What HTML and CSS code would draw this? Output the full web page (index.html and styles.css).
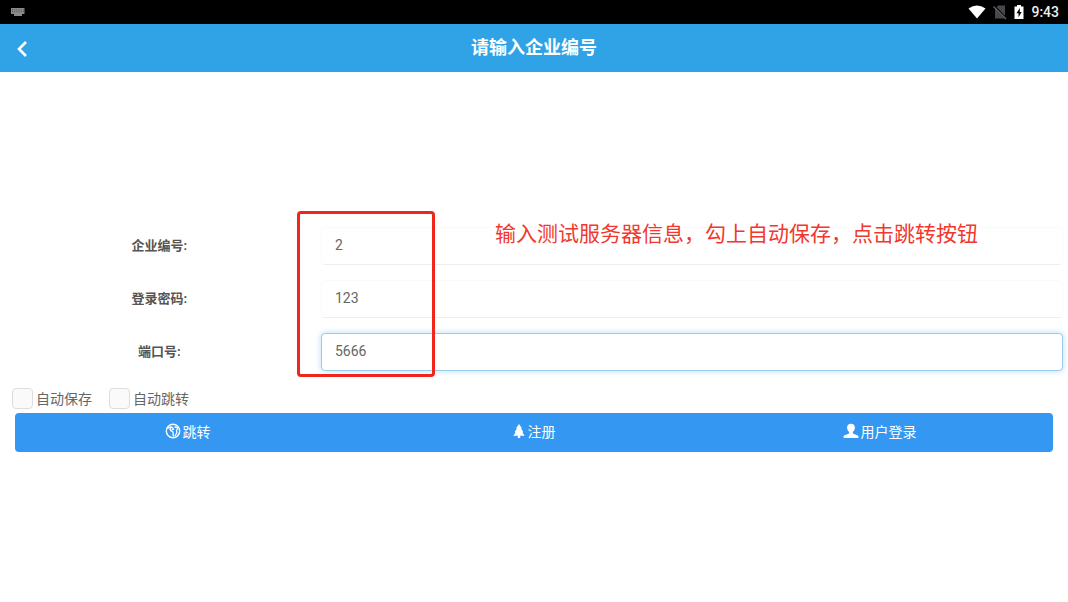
FILE: index.html
```html
<!DOCTYPE html>
<html lang="zh-CN">
<head>
<meta charset="utf-8">
<meta name="viewport" content="width=device-width, initial-scale=1">
<title>请输入企业编号</title>
<link rel="stylesheet" href="styles.css">
</head>
<body>
<div class="statusbar">
  <svg class="keyboard" width="16" height="10" viewBox="0 0 16 10" aria-hidden="true">
    <path fill="#8a8a8a" d="M1 1h13.500v6H1zM4 7h8v2H4z"/>
    <path stroke="#333" stroke-width=".6" stroke-dasharray="1 1.200" d="M2 2.800h12M2 4.600h12"/>
  </svg>
  <div class="status-icons">
    <svg width="18" height="15" viewBox="0 0 18 15" aria-hidden="true"><path fill="#fff" d="M.5 3.500Q9-2.500 17.500 3.500L9 13.500z"/></svg>
    <svg width="14" height="15" viewBox="0 0 14 15" aria-hidden="true">
      <path fill="#48484c" d="M5 .5h7v13H2V4z"/>
      <path stroke="#000" stroke-width="2.400" d="M1 1l12 12.500"/>
      <path stroke="#68686c" stroke-width="1.200" d="M.5 1.500l12.500 12.500"/>
    </svg>
    <svg width="10" height="15" viewBox="0 0 10 15" aria-hidden="true">
      <path fill="#fff" d="M3 0h4v1.500h2.500V14H.5V1.500H3z"/>
      <path fill="#000" d="M5.800 3L2.500 8.200h2v4L7.700 7h-1.900z"/>
    </svg>
    <span class="clock">9:43</span>
  </div>
</div>
<header class="titlebar">
  <button class="back" type="button" aria-label="返回">
    <svg width="12" height="18" viewBox="0 0 12 18" aria-hidden="true"><path d="M10 2L3 9l7 7" fill="none" stroke="#fff" stroke-width="2.600"/></svg>
  </button>
  <h1 class="title">请输入企业编号</h1>
</header>
<main class="content">
  <form class="form">
    <div class="fields">
      <div class="field">
        <label class="label" for="company">企业编号:</label>
        <input class="input" id="company" type="text" value="2">
      </div>
      <div class="field">
        <label class="label" for="password">登录密码:</label>
        <input class="input" id="password" type="text" value="123">
      </div>
      <div class="field">
        <label class="label" for="port">端口号:</label>
        <input class="input input-active" id="port" type="text" value="5666">
      </div>
      <div class="highlight"></div>
      <p class="note">输入测试服务器信息，勾上自动保存，点击跳转按钮</p>
    </div>
    <div class="options">
      <label class="option"><input class="check" type="checkbox">自动保存</label>
      <label class="option"><input class="check" type="checkbox">自动跳转</label>
    </div>
    <div class="actions">
      <button class="action" type="button">
        <svg width="16" height="16" viewBox="0 0 16 16" aria-hidden="true">
          <circle cx="8" cy="8" r="6.700" fill="none" stroke="#fff" stroke-width="1.400"/>
          <path fill="none" stroke="#fff" stroke-width="1.300" stroke-linejoin="round" d="M2.500 5.500L5 4l2.500.5 1 1.800-2 .5M5 4.500l.5 3L8 9l.3 4.500M9.500 4l3.500.5-1.500 3 .3 2.500-2 3"/>
        </svg>
        跳转
      </button>
      <button class="action" type="button">
        <svg width="14" height="16" viewBox="0 0 14 16" aria-hidden="true"><path fill="#fff" d="M7 1l2.800 4-.6.800L11.300 9l-.8.800 2.300 3H8.200V15H5.800v-2.200H1.200l2.300-3-.8-.8 2.100-3.200-.6-.8z"/></svg>
        注册
      </button>
      <button class="action" type="button">
        <svg width="16" height="16" viewBox="0 0 16 16" aria-hidden="true"><path fill="#fff" d="M8 .8c2.600 0 3.900 1.500 3.900 3.700 0 1.700-.7 3.500-2 4.400v1.300c.3.900 4.900 1.500 5.500 3.100V15H.6v-1.700c.6-1.600 5.200-2.200 5.500-3.100V8.900c-1.300-.9-2-2.700-2-4.400C4.100 2.300 5.400.8 8 .8z"/></svg>
        用户登录
      </button>
    </div>
  </form>
</main>
</body>
</html>
```
FILE: styles.css
```css
* {
  box-sizing: border-box;
}

body {
  margin: 0;
  background: #fff;
  color: #555;
  font-family: Roboto, "Noto Sans CJK SC", sans-serif;
  font-size: 14px;
}

button,
input {
  font: inherit;
}

svg {
  display: block;
  flex: none;
}

.statusbar {
  display: flex;
  align-items: center;
  justify-content: space-between;
  height: 24px;
  padding: 0 9px 0 10px;
  background: #000;
}

.status-icons {
  display: flex;
  align-items: center;
  gap: 7px;
}

.clock {
  color: #eee;
  font-size: 14px;
  font-weight: 500;
  line-height: 24px;
}

.titlebar {
  display: grid;
  grid-template-columns: 44px 1fr 44px;
  align-items: center;
  height: 48px;
  background: #30a2e6;
}

.back {
  display: flex;
  align-items: center;
  justify-content: center;
  height: 48px;
  padding: 2px 0 0;
  border: 0;
  background: none;
}

.title {
  margin: 0;
  color: #fff;
  font-size: 18px;
  font-weight: 700;
  line-height: 48px;
  text-align: center;
}

.content {
  padding-top: 155px;
}

.fields {
  position: relative;
  display: grid;
  gap: 15px;
}

.field {
  display: grid;
  grid-template-columns: 30% 1fr;
  align-items: center;
  padding-right: 5px;
}

.label {
  padding-bottom: 4px;
  font-size: 13px;
  font-weight: 700;
  text-align: center;
}

.field .input {
  justify-self: stretch;
  margin-left: 2px;
}

.input {
  height: 38px;
  padding: 0 13px 2px;
  border: 1px solid #fafafa;
  border-bottom-color: #eee;
  border-radius: 4px;
  outline: 0;
  background: #fff;
  color: #666;
}

.field .input-active {
  border-color: #9dcbea;
  box-shadow: 0 0 6px #b5dcf5;
}

.highlight {
  position: absolute;
  top: -16px;
  left: 297px;
  width: 138px;
  height: 166px;
  border: 3px solid #f0261c;
  border-radius: 4px;
  pointer-events: none;
}

.note {
  position: absolute;
  top: -8px;
  left: 495px;
  margin: 0;
  color: #f0382e;
  font-size: 21px;
  font-weight: 400;
  line-height: 30px;
  white-space: nowrap;
  pointer-events: none;
}

.options {
  display: flex;
  gap: 17px;
  padding: 17px 12px 4px;
}

.option {
  display: flex;
  align-items: center;
  gap: 3px;
  color: #666;
  line-height: 20px;
}

.check {
  width: 21px;
  height: 21px;
  margin: 0;
  appearance: none;
  border: 1px solid #ddd;
  border-radius: 4px;
  background: #fafafa;
}

.check:checked {
  background: #3498f2;
}

.actions {
  display: grid;
  grid-template-columns: repeat(3, 1fr);
  margin: 0 15px;
  overflow: hidden;
  border-radius: 4px;
  background: #3498f2;
}

.action {
  display: flex;
  align-items: center;
  justify-content: center;
  gap: 2px;
  height: 39px;
  padding: 0 1px 4px 0;
  border: 0;
  background: none;
  color: #fff;
}
```
